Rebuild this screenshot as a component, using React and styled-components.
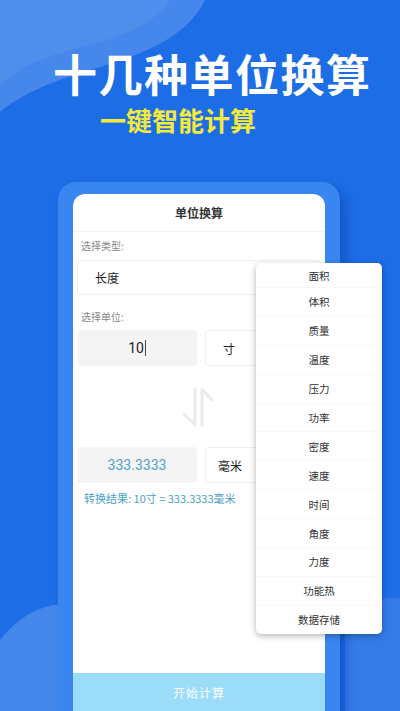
import React from 'react';
import styled, { createGlobalStyle } from 'styled-components';

const GlobalStyle = createGlobalStyle`
  html, body { margin: 0; padding: 0; }
  body {
    font-family: "Noto Sans CJK SC", "Noto Sans", sans-serif;
    background: #1c6de6;
  }
`;

const Page = styled.div`
  position: relative;
  width: 400px;
  height: 711px;
  overflow: hidden;
  background: #1d6de6;
  display: flex;
  flex-direction: column;
`;

const Decor = styled.svg`
  position: absolute;
  left: 0;
  top: 0;
  width: 400px;
  height: 711px;
  pointer-events: none;
`;

const Header = styled.div`
  position: relative;
  display: flex;
  flex-direction: column;
  padding: 50px 0 0 53px;
  height: 136px;
  box-sizing: border-box;
`;

const Headline = styled.h1`
  margin: 0;
  font-size: 44px;
  line-height: 46px;
  font-weight: 700;
  letter-spacing: 1.5px;
  color: #ffffff;
`;

const Subline = styled.div`
  margin: 8px 0 0 47px;
  font-size: 26px;
  line-height: 32px;
  font-weight: 700;
  color: #f4ea3c;
`;

const Frame = styled.div`
  position: relative;
  margin: 46px 0 0 58px;
  width: 282px;
  flex: 1;
  box-sizing: border-box;
  padding: 12px 15px 0 15px;
  background: #3a86f0;
  border-radius: 18px 18px 0 0;
  box-shadow: 6px 6px 10px rgba(10, 60, 170, 0.45);
  display: flex;
`;

const Screen = styled.div`
  flex: 1;
  background: #ffffff;
  border-radius: 12px 12px 0 0;
  display: flex;
  flex-direction: column;
  overflow: hidden;
`;

const TitleBar = styled.div`
  height: 37px;
  display: flex;
  align-items: center;
  justify-content: center;
  font-size: 12px;
  font-weight: 700;
  color: #333;
  border-bottom: 1px solid #f2f2f2;
  flex-shrink: 0;
`;

const Body = styled.div`
  flex: 1;
  display: flex;
  flex-direction: column;
  padding: 0 4px;
`;

const Label = styled.div`
  font-size: 10px;
  color: #888;
  line-height: 14px;
  padding-left: 4px;
  margin-top: ${p => p.$top}px;
`;

const Select = styled.div`
  margin-top: 7px;
  height: 35px;
  border: 1px solid #f0f0f0;
  border-radius: 4px;
  box-sizing: border-box;
  display: flex;
  align-items: center;
  padding-left: 17px;
  font-size: 12px;
  color: #222;
`;

const Row = styled.div`
  display: flex;
  gap: 8px;
  margin-top: ${p => p.$top}px;
`;

const ValueBox = styled.div`
  width: 120px;
  height: 36px;
  border-radius: 4px;
  background: #f4f4f4;
  display: flex;
  align-items: center;
  justify-content: center;
  font-family: "Roboto", "Noto Sans CJK SC", sans-serif;
  font-size: 14px;
  color: ${p => p.$accent ? '#4aa3c6' : '#222'};
`;

const Caret = styled.span`
  display: inline-block;
  width: 1px;
  height: 16px;
  background: #444;
  margin-left: 1px;
`;

const UnitBox = styled.div`
  flex: 1;
  height: 36px;
  border: 1px solid #eeeeee;
  border-radius: 4px;
  box-sizing: border-box;
  display: flex;
  align-items: center;
  padding-left: ${p => p.$pad}px;
  font-size: 12px;
  color: #222;
`;

const SwapArea = styled.div`
  height: 81px;
  display: flex;
  align-items: center;
  justify-content: center;
  padding-right: 2px;
`;

const Result = styled.div`
  margin-top: 8px;
  padding-left: 7px;
  font-size: 11px;
  line-height: 14px;
  color: #4aa3c6;
`;

const Spacer = styled.div`
  flex: 1;
`;

const StartButton = styled.div`
  height: 38px;
  margin: 0 -4px;
  background: #9bdcf9;
  color: #ffffff;
  font-size: 12px;
  display: flex;
  align-items: center;
  justify-content: center;
  letter-spacing: 1px;
`;

const Menu = styled.div`
  position: absolute;
  left: 256px;
  top: 263px;
  width: 126px;
  background: #ffffff;
  border-radius: 5px;
  box-shadow: 0 2px 6px rgba(0, 0, 0, 0.3);
  display: flex;
  flex-direction: column;
  overflow: hidden;
`;

const MenuItem = styled.div`
  height: ${p => p.$first ? 24 : 28.9}px;
  display: flex;
  align-items: center;
  justify-content: center;
  font-size: 10.5px;
  color: #333;
  border-top: ${p => p.$first ? 'none' : '1px solid #f9f9f9'};
  box-sizing: border-box;
`;

const units = ['面积', '体积', '质量', '温度', '压力', '功率', '密度', '速度', '时间', '角度', '力度', '功能热', '数据存储'];

const SwapIcon = () => (
  <svg width="40" height="44" viewBox="0 0 40 44" fill="none" stroke="#ebebeb" strokeWidth="3" strokeLinecap="round" strokeLinejoin="round">
    <path d="M17 4 V40 L6 29" />
    <path d="M24 40 V4 L34 15" />
  </svg>
);

export default function App() {
  return (
    <>
      <GlobalStyle />
      <Page>
        <Decor viewBox="0 0 400 711">
          <path d="M0 0 H205 C185 40 140 55 90 70 C50 82 20 95 0 112 Z" fill="#ffffff" fillOpacity="0.18" />
          <path d="M0 0 H170 C150 30 110 40 70 50 C40 58 15 70 0 85 Z" fill="#ffffff" fillOpacity="0.06" />
          <path d="M0 711 V640 C20 615 45 602 70 605 L70 711 Z" fill="#ffffff" fillOpacity="0.18" />
          <path d="M345 711 V605 C365 600 385 598 400 598 V711 Z" fill="#ffffff" fillOpacity="0.1" />
        </Decor>
        <Header>
          <Headline>十几种单位换算</Headline>
          <Subline>一键智能计算</Subline>
        </Header>
        <Frame>
          <Screen>
            <TitleBar>单位换算</TitleBar>
            <Body>
              <Label $top={7}>选择类型:</Label>
              <Select>长度</Select>
              <Label $top={15}>选择单位:</Label>
              <Row $top={6}>
                <ValueBox>10<Caret /></ValueBox>
                <UnitBox $pad={17}>寸</UnitBox>
              </Row>
              <SwapArea>
                <SwapIcon />
              </SwapArea>
              <Row $top={0}>
                <ValueBox $accent>333.3333</ValueBox>
                <UnitBox $pad={12}>毫米</UnitBox>
              </Row>
              <Result>转换结果: 10寸 = 333.3333毫米</Result>
              <Spacer />
              <StartButton>开始计算</StartButton>
            </Body>
          </Screen>
        </Frame>
        <Menu>
          {units.map((u, i) => (
            <MenuItem key={u} $first={i === 0}>{u}</MenuItem>
          ))}
        </Menu>
      </Page>
    </>
  );
}
